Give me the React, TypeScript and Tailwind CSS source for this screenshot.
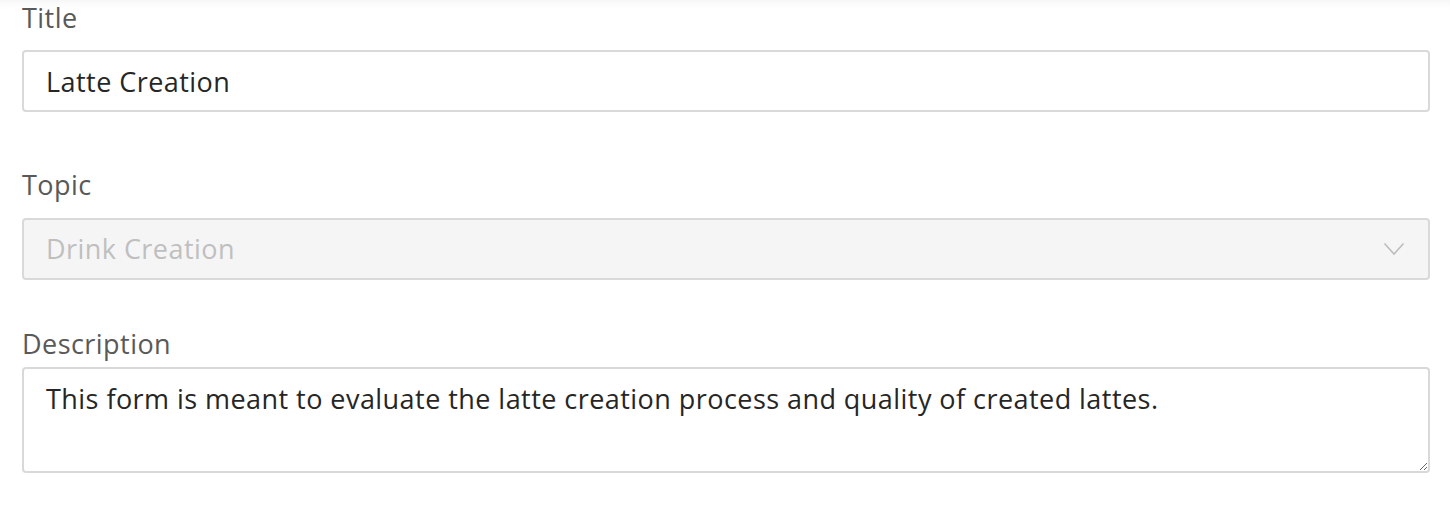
export default function App() {
  return (
    <div
      className="min-h-[512px] bg-white pl-[22px] pr-[20px] shadow-[inset_0_10px_10px_-8px_rgba(0,0,0,0.05)]"
      style={{ fontFamily: '"Open Sans", "Liberation Sans", sans-serif' }}
    >
      <label className="block text-[27px] leading-[36px] tracking-[0.45px] text-[#595959]">Title</label>
      <input
        readOnly
        value="Latte Creation"
        className="mt-[14px] block h-[62px] w-full rounded-[4px] border-2 border-[#d9d9d9] bg-white px-[22px] pt-[1px] text-[27px] tracking-[0.45px] text-[#262626] outline-none"
      />

      <label className="mt-[55px] block text-[27px] leading-[36px] tracking-[0.45px] text-[#595959]">Topic</label>
      <div className="mt-[15px] flex h-[62px] w-full items-center justify-between rounded-[4px] border-2 border-[#d9d9d9] bg-[#f5f5f5] pl-[22px] pr-[22px]">
        <span className="text-[27px] tracking-[0.45px] text-[#bfbfbf]">Drink Creation</span>
        <svg width="22" height="14" viewBox="0 0 22 14" fill="none" className="mr-[1px]">
          <path d="M1.5 1.5 L11 12 L20.5 1.5" stroke="#bdbdbd" strokeWidth="1.6" />
        </svg>
      </div>

      <label className="mt-[46px] block text-[27px] leading-[36px] tracking-[0.45px] text-[#595959]">Description</label>
      <textarea
        readOnly
        value="This form is meant to evaluate the latte creation process and quality of created lattes."
        className="mt-[5px] block h-[106px] w-full resize-y rounded-[4px] border-2 border-[#d9d9d9] bg-white px-[22px] pt-[12px] text-[27px] leading-[36px] tracking-[0.45px] text-[#262626] outline-none"
      />
    </div>
  );
}
